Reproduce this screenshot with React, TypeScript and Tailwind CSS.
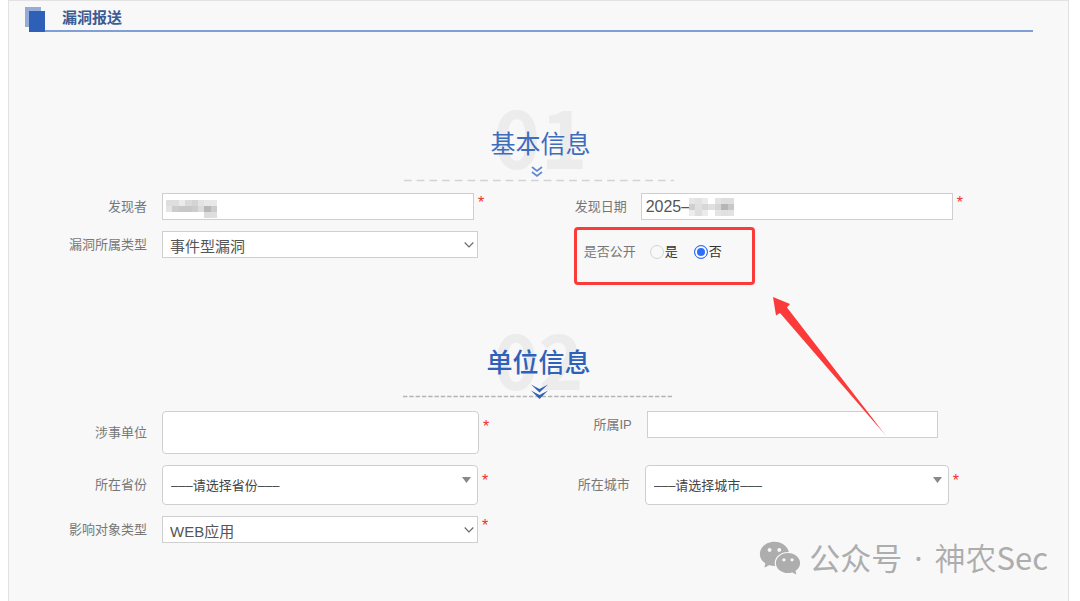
import React, { useState } from 'react';
import { AiFillWechat } from 'react-icons/ai';

const fieldBorder = 'border border-[#cfcfcf] bg-white outline-none';

type LabelProps = {
  htmlFor: string;
  className: string;
  children: React.ReactNode;
};

const Label = ({ htmlFor, className, children }: LabelProps) => (
  <label htmlFor={htmlFor} className={`shrink-0 text-right text-[13px] leading-5 text-[#777] ${className}`}>
    {children}
  </label>
);

const Required = ({ className = '' }: { className?: string }) => (
  <span className={`ml-1 self-start text-base leading-5 text-[#f0302a] ${className}`} aria-hidden="true">
    *
  </span>
);

type SelectProps = {
  id: string;
  options: string[];
  variant: 'plain' | 'rounded';
  className: string;
};

const Select = ({ id, options, variant, className }: SelectProps) => (
  <div className={`relative ${className}`}>
    <select
      id={id}
      className={`block w-full appearance-none pr-6 ${fieldBorder} ${
        variant === 'plain'
          ? 'h-[27px] pl-[7px] pt-1 text-[15px] text-[#555]'
          : 'h-10 rounded pl-2 pt-0.5 text-[13px] text-[#444]'
      }`}
    >
      {options.map((option) => (
        <option key={option}>{option}</option>
      ))}
    </select>
    {variant === 'plain' ? (
      <svg className="pointer-events-none absolute right-1 top-2.5 h-2 w-2.5" viewBox="0 0 10 8" fill="none">
        <path d="M0.7 1.5 5 6l4.3-4.5" stroke="#666" strokeWidth="1.1" />
      </svg>
    ) : (
      <svg className="pointer-events-none absolute right-[7px] top-3 h-1.5 w-[9px]" viewBox="0 0 9 6">
        <path d="M0 0h9L4.5 6z" fill="#888" />
      </svg>
    )}
  </div>
);

// Pixelated cover for private values: one row of hex greys per line
const Mosaic = ({ rows, className }: { rows: string[][]; className: string }) => (
  <svg
    className={`pointer-events-none absolute ${className}`}
    viewBox={`0 0 ${rows[0].length} ${rows.length}`}
    preserveAspectRatio="none"
    shapeRendering="crispEdges"
  >
    {rows.map((row, y) =>
      row.map((fill, x) => <rect key={`${x}-${y}`} x={x} y={y} width="1" height="1" fill={fill} />)
    )}
  </svg>
);

const nameMosaic = [
  ['#dedede', '#dedede', '#ebebeb', '#dadada', '#d4d4d4', '#e3e3e3', '#e8e8e8', '#e8e8e8'],
  ['#e4e4e4', '#cccccc', '#c8c8c8', '#c8c8c8', '#cccccc', '#dcdcdc', '#b8b8b8', '#cccccc'],
  ['#ffffff', '#ffffff', '#ffffff', '#ffffff', '#ffffff', '#ffffff', '#dddddd', '#dfdfdf'],
];

const dateMosaic = [
  ['#e6e6e6', '#e2e2e2', '#ebebeb', '#ffffff', '#e4e4e4', '#dedede', '#dedede'],
  ['#cfcfcf', '#e0e0e0', '#d8d8d8', '#e0e0e0', '#d6d6d6', '#b6b6b6', '#c8c8c8'],
  ['#ececec', '#dedede', '#ebebeb', '#ffffff', '#e4e4e4', '#e0e0e0', '#e2e2e2'],
];

const radioClass =
  'mr-px size-3.5 appearance-none rounded-full border border-[#d5d5d5] checked:border-[#2f6ff5] checked:bg-[#2f6ff5] checked:shadow-[inset_0_0_0_2px_#fff]';

function App() {
  const [isPublic, setIsPublic] = useState(false);

  return (
    <div className="bg-white pl-2 pr-[11px] font-['Liberation_Sans','Noto_Sans_CJK_SC',sans-serif]">
      <main className="relative min-h-screen overflow-hidden border-x border-t border-[#e2e2e2] bg-[#f8f8f8]">
        {/* Title bar */}
        <header className="ml-4 mr-[35px] flex h-[31px]">
          <svg className="mt-1.5 h-[25px] w-5 shrink-0" viewBox="0 0 20 25">
            <rect x="0" y="0" width="16" height="20" fill="#95acd9" />
            <rect x="4" y="4" width="16" height="21" fill="#2e60b8" />
          </svg>
          <h1 className="flex-1 border-b-2 border-[#7f9fd6] pl-[17px] text-[15px] font-bold leading-[34px] text-[#3b5b93]">
            漏洞报送
          </h1>
        </header>

        <form>
          {/* Basic info */}
          <section>
            <div className="relative mt-[92px] flex flex-col items-center">
              <span className="absolute -top-[30px] pl-1 text-[80px] font-bold leading-[80px] text-[#ececec] font-['Noto_Sans_CJK_SC',sans-serif]">
                01
              </span>
              <h2 className="relative pl-1 text-[25px] leading-9 text-[#3e6dbd] font-['Noto_Sans_CJK_SC',sans-serif]">
                基本信息
              </h2>
              <svg className="relative mt-1.5 h-4 w-[271px]" viewBox="0 0 271 16" fill="none">
                <path d="M1 14.5h270" stroke="#d2d2d2" strokeWidth="1.3" strokeDasharray="7.7 5" />
                <path d="m129 1 5 4 5-4M129 6l5 4 5-4" stroke="#6288cf" strokeWidth="1.7" />
              </svg>
            </div>

            <div className="mt-[11px] grid grid-cols-[13fr_12fr] items-start gap-y-[11px]">
              <div className="flex items-center">
                <Label htmlFor="finder" className="w-[153px] pr-[15px]">发现者</Label>
                <div className="relative">
                  <input id="finder" type="text" className={`block h-[27px] w-[312px] px-1 ${fieldBorder}`} />
                  <Mosaic rows={nameMosaic} className="left-1 top-[7px] h-[18px] w-[51px]" />
                </div>
                <Required />
              </div>
              <div className="flex items-center">
                <Label htmlFor="date" className="w-[81px] pr-3.5">发现日期</Label>
                <div className="relative">
                  <input
                    id="date"
                    type="text"
                    defaultValue="2025–"
                    className={`block h-[27px] w-[312px] px-1 text-base text-[#555] ${fieldBorder}`}
                  />
                  <Mosaic rows={dateMosaic} className="left-12 top-[5px] h-[18px] w-[45px]" />
                </div>
                <Required />
              </div>

              <div className="flex items-center">
                <Label htmlFor="kind" className="w-[153px] pr-[15px]">漏洞所属类型</Label>
                <Select id="kind" variant="plain" options={['事件型漏洞']} className="w-[316px]" />
              </div>
              <fieldset
                aria-labelledby="public-label"
                className="relative flex h-[42px] items-center text-[13px] leading-5"
              >
                <span id="public-label" className="w-[90px] shrink-0 pr-3.5 text-right text-[#777]">
                  是否公开
                </span>
                <label className="flex items-center text-[#333]">
                  <input
                    type="radio"
                    name="public"
                    checked={isPublic}
                    onChange={() => setIsPublic(true)}
                    className={radioClass}
                  />
                  是
                </label>
                <label className="ml-4 flex items-center text-[#333]">
                  <input
                    type="radio"
                    name="public"
                    checked={!isPublic}
                    onChange={() => setIsPublic(false)}
                    className={radioClass}
                  />
                  否
                </label>

                {/* Callout frame and arrow */}
                <div className="pointer-events-none absolute -top-1 left-3.5 h-[58px] w-[181px] rounded border-3 border-[#fb3b3a]" />
                <svg
                  className="pointer-events-none absolute left-[212px] top-[65px] z-10 h-[142px] w-[115px]"
                  viewBox="0 0 115 142"
                >
                  <defs>
                    <linearGradient id="tail" gradientUnits="userSpaceOnUse" x1="0" y1="0" x2="113" y2="140">
                      <stop offset="0.9" stopColor="#fb3b3a" />
                      <stop offset="1" stopColor="#fb3b3a" stopOpacity="0.5" />
                    </linearGradient>
                  </defs>
                  <path d="M1 1 18 8l-3 3.5L115 141 8 17l-4 2.5z" fill="url(#tail)" />
                </svg>
              </fieldset>
            </div>
          </section>

          {/* Organisation info */}
          <section>
            <div className="relative mt-[70px] flex flex-col items-center">
              <span className="absolute -top-6 text-[76px] font-bold leading-[76px] text-[#ececec] font-['Noto_Sans_CJK_SC',sans-serif]">
                02
              </span>
              <h2 className="relative text-[26px] font-medium leading-9 text-[#2e62ba] font-['Noto_Sans_CJK_SC',sans-serif]">
                单位信息
              </h2>
              <svg className="relative mt-[5px] h-4 w-[271px]" viewBox="0 0 271 16" fill="none">
                <path d="M0 12.5h271" stroke="#b4b4b4" strokeWidth="1.3" strokeDasharray="4.4 1.9" />
                <path d="m128 .5 8.500 4.500L145 .5l-8.500 8zM128 6.500l8.500 4.500 8.500-4.500-8.500 8.500z" fill="#2e62ba" />
              </svg>
            </div>

            <div className="mt-[11px] grid grid-cols-[13fr_12fr] items-start gap-y-[11px]">
              <div className="flex items-center">
                <Label htmlFor="unit" className="w-[153px] pr-[15px]">涉事单位</Label>
                <input id="unit" type="text" className={`h-[43px] w-[317px] rounded px-2 ${fieldBorder}`} />
                <Required className="mt-1.5" />
              </div>
              <div className="flex items-center">
                <Label htmlFor="ip" className="w-[87px] pr-[15px]">所属IP</Label>
                <input id="ip" type="text" className={`h-[27px] w-[291px] px-1 ${fieldBorder}`} />
              </div>

              <div className="flex items-center">
                <Label htmlFor="province" className="w-[153px] pr-[15px]">所在省份</Label>
                <Select id="province" variant="rounded" options={['–––请选择省份–––']} className="w-[316px]" />
                <Required className="mt-1.5" />
              </div>
              <div className="flex items-center">
                <Label htmlFor="city" className="w-[85px] pr-[15px]">所在城市</Label>
                <Select id="city" variant="rounded" options={['–––请选择城市–––']} className="w-[304px]" />
                <Required className="mt-1.5" />
              </div>

              <div className="flex items-center">
                <Label htmlFor="target" className="w-[153px] pr-[15px]">影响对象类型</Label>
                <Select id="target" variant="plain" options={['WEB应用']} className="w-[316px]" />
                <Required />
              </div>
            </div>
          </section>
        </form>

        {/* Watermark */}
        <div className="pointer-events-none absolute bottom-5 right-5 flex items-center gap-1.5 text-[#adadad] font-['Noto_Sans_CJK_SC',sans-serif]">
          <AiFillWechat size={46} />
          <span className="text-[31px] leading-[46px]">
            公众号<span className="mx-3 font-['Noto_Sans',sans-serif]">·</span>
            <span className="font-[350]">神农</span>Sec
          </span>
        </div>
      </main>
    </div>
  );
}

export default App;
